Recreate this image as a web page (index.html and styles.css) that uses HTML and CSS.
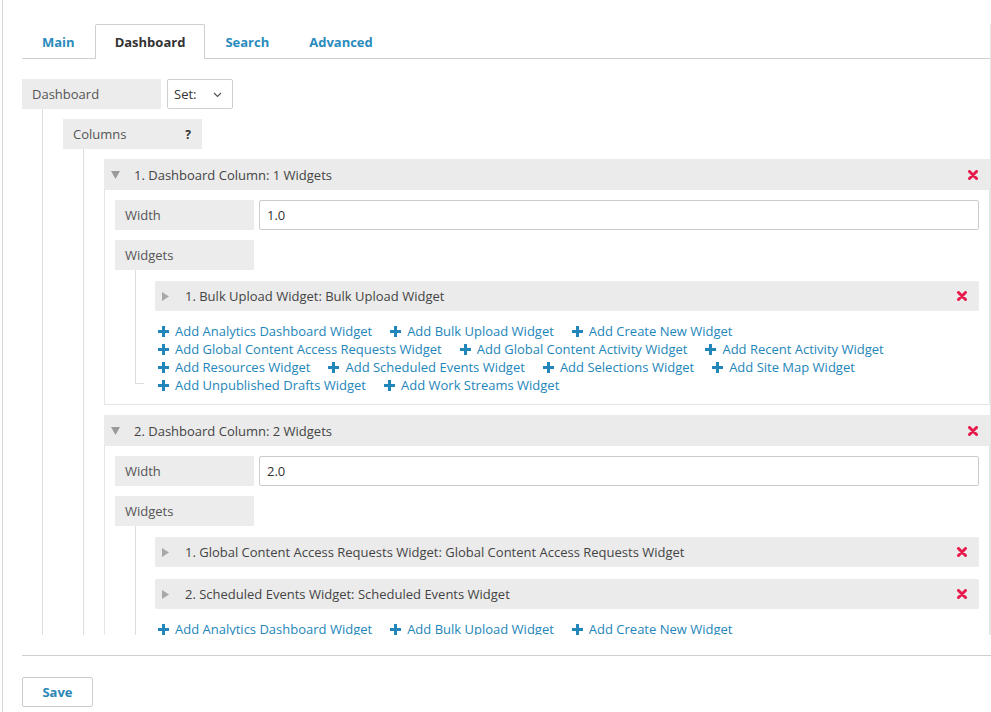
FILE: index.html
```html
<!DOCTYPE html>
<html>
<head>
<meta charset="utf-8">
<link rel="stylesheet" href="styles.css">
</head>
<body>
<div class="frame">
  <div class="panel">
    <nav class="tabs">
      <a class="tab">Main</a>
      <a class="tab active">Dashboard</a>
      <a class="tab">Search</a>
      <a class="tab">Advanced</a>
    </nav>
    <div class="scroll">
      <div class="row">
        <div class="label">Dashboard</div>
        <div class="select">Set:<svg class="chev" width="9" height="6" viewBox="0 0 9 6"><path d="M1 1 L4.5 4.5 L8 1" fill="none" stroke="#555" stroke-width="1.2"/></svg></div>
      </div>
      <div class="children">
        <div class="row">
          <div class="label label-help">Columns <span class="help">?</span></div>
        </div>
        <div class="children">
          <div class="columns">
            <div class="col">
              <div class="col-head">
                <svg class="tri-down" width="9" height="8" viewBox="0 0 9 8"><polygon points="0,0 9,0 4.5,8" fill="#9a9a9a"/></svg>
                <span class="col-title">1. Dashboard Column: 1 Widgets</span>
                <svg class="del" width="10" height="10" viewBox="0 0 10 10"><path d="M1.5 1.5 L8.5 8.5 M8.5 1.5 L1.5 8.5" stroke="#e8194b" stroke-width="3" stroke-linecap="round"/></svg>
              </div>
              <div class="col-body">
                <div class="row">
                  <div class="label">Width</div>
                  <div class="input">1.0</div>
                </div>
                <div class="row">
                  <div class="label">Widgets</div>
                </div>
                <div class="branch">
                  <div class="item">
                    <svg class="tri-right" width="7" height="9" viewBox="0 0 7 9"><polygon points="0,0 7,4.5 0,9" fill="#a8a8a8"/></svg>
                    <span class="item-title">1. Bulk Upload Widget: Bulk Upload Widget</span>
                    <svg class="del" width="10" height="10" viewBox="0 0 10 10"><path d="M1.5 1.5 L8.5 8.5 M8.5 1.5 L1.5 8.5" stroke="#e8194b" stroke-width="3" stroke-linecap="round"/></svg>
                  </div>
                  <div class="links">
                    <div class="link-row">
                      <a class="add"><svg class="plus" width="11" height="11" viewBox="0 0 11 11"><path d="M4 0h3v4h4v3h-4v4h-3v-4h-4v-3h4z" fill="#2386ba"/></svg>Add Analytics Dashboard Widget</a>
                      <a class="add"><svg class="plus" width="11" height="11" viewBox="0 0 11 11"><path d="M4 0h3v4h4v3h-4v4h-3v-4h-4v-3h4z" fill="#2386ba"/></svg>Add Bulk Upload Widget</a>
                      <a class="add"><svg class="plus" width="11" height="11" viewBox="0 0 11 11"><path d="M4 0h3v4h4v3h-4v4h-3v-4h-4v-3h4z" fill="#2386ba"/></svg>Add Create New Widget</a>
                    </div>
                    <div class="link-row">
                      <a class="add"><svg class="plus" width="11" height="11" viewBox="0 0 11 11"><path d="M4 0h3v4h4v3h-4v4h-3v-4h-4v-3h4z" fill="#2386ba"/></svg>Add Global Content Access Requests Widget</a>
                      <a class="add"><svg class="plus" width="11" height="11" viewBox="0 0 11 11"><path d="M4 0h3v4h4v3h-4v4h-3v-4h-4v-3h4z" fill="#2386ba"/></svg>Add Global Content Activity Widget</a>
                      <a class="add"><svg class="plus" width="11" height="11" viewBox="0 0 11 11"><path d="M4 0h3v4h4v3h-4v4h-3v-4h-4v-3h4z" fill="#2386ba"/></svg>Add Recent Activity Widget</a>
                    </div>
                    <div class="link-row">
                      <a class="add"><svg class="plus" width="11" height="11" viewBox="0 0 11 11"><path d="M4 0h3v4h4v3h-4v4h-3v-4h-4v-3h4z" fill="#2386ba"/></svg>Add Resources Widget</a>
                      <a class="add"><svg class="plus" width="11" height="11" viewBox="0 0 11 11"><path d="M4 0h3v4h4v3h-4v4h-3v-4h-4v-3h4z" fill="#2386ba"/></svg>Add Scheduled Events Widget</a>
                      <a class="add"><svg class="plus" width="11" height="11" viewBox="0 0 11 11"><path d="M4 0h3v4h4v3h-4v4h-3v-4h-4v-3h4z" fill="#2386ba"/></svg>Add Selections Widget</a>
                      <a class="add"><svg class="plus" width="11" height="11" viewBox="0 0 11 11"><path d="M4 0h3v4h4v3h-4v4h-3v-4h-4v-3h4z" fill="#2386ba"/></svg>Add Site Map Widget</a>
                    </div>
                    <div class="link-row">
                      <a class="add"><svg class="plus" width="11" height="11" viewBox="0 0 11 11"><path d="M4 0h3v4h4v3h-4v4h-3v-4h-4v-3h4z" fill="#2386ba"/></svg>Add Unpublished Drafts Widget</a>
                      <a class="add"><svg class="plus" width="11" height="11" viewBox="0 0 11 11"><path d="M4 0h3v4h4v3h-4v4h-3v-4h-4v-3h4z" fill="#2386ba"/></svg>Add Work Streams Widget</a>
                    </div>
                  </div>
                </div>
              </div>
            </div>

            <div class="col">
              <div class="col-head">
                <svg class="tri-down" width="9" height="8" viewBox="0 0 9 8"><polygon points="0,0 9,0 4.5,8" fill="#9a9a9a"/></svg>
                <span class="col-title">2. Dashboard Column: 2 Widgets</span>
                <svg class="del" width="10" height="10" viewBox="0 0 10 10"><path d="M1.5 1.5 L8.5 8.5 M8.5 1.5 L1.5 8.5" stroke="#e8194b" stroke-width="3" stroke-linecap="round"/></svg>
              </div>
              <div class="col-body">
                <div class="row">
                  <div class="label">Width</div>
                  <div class="input">2.0</div>
                </div>
                <div class="row">
                  <div class="label">Widgets</div>
                </div>
                <div class="branch">
                  <div class="item">
                    <svg class="tri-right" width="7" height="9" viewBox="0 0 7 9"><polygon points="0,0 7,4.5 0,9" fill="#a8a8a8"/></svg>
                    <span class="item-title">1. Global Content Access Requests Widget: Global Content Access Requests Widget</span>
                    <svg class="del" width="10" height="10" viewBox="0 0 10 10"><path d="M1.5 1.5 L8.5 8.5 M8.5 1.5 L1.5 8.5" stroke="#e8194b" stroke-width="3" stroke-linecap="round"/></svg>
                  </div>
                  <div class="item">
                    <svg class="tri-right" width="7" height="9" viewBox="0 0 7 9"><polygon points="0,0 7,4.5 0,9" fill="#a8a8a8"/></svg>
                    <span class="item-title">2. Scheduled Events Widget: Scheduled Events Widget</span>
                    <svg class="del" width="10" height="10" viewBox="0 0 10 10"><path d="M1.5 1.5 L8.5 8.5 M8.5 1.5 L1.5 8.5" stroke="#e8194b" stroke-width="3" stroke-linecap="round"/></svg>
                  </div>
                  <div class="links">
                    <div class="link-row">
                      <a class="add"><svg class="plus" width="11" height="11" viewBox="0 0 11 11"><path d="M4 0h3v4h4v3h-4v4h-3v-4h-4v-3h4z" fill="#2386ba"/></svg>Add Analytics Dashboard Widget</a>
                      <a class="add"><svg class="plus" width="11" height="11" viewBox="0 0 11 11"><path d="M4 0h3v4h4v3h-4v4h-3v-4h-4v-3h4z" fill="#2386ba"/></svg>Add Bulk Upload Widget</a>
                      <a class="add"><svg class="plus" width="11" height="11" viewBox="0 0 11 11"><path d="M4 0h3v4h4v3h-4v4h-3v-4h-4v-3h4z" fill="#2386ba"/></svg>Add Create New Widget</a>
                    </div>
                    <div class="link-row">
                      <a class="add"><svg class="plus" width="11" height="11" viewBox="0 0 11 11"><path d="M4 0h3v4h4v3h-4v4h-3v-4h-4v-3h4z" fill="#2386ba"/></svg>Add Global Content Access Requests Widget</a>
                      <a class="add"><svg class="plus" width="11" height="11" viewBox="0 0 11 11"><path d="M4 0h3v4h4v3h-4v4h-3v-4h-4v-3h4z" fill="#2386ba"/></svg>Add Global Content Activity Widget</a>
                    </div>
                  </div>
                </div>
              </div>
            </div>
          </div>
        </div>
      </div>
    </div>
  </div>
  <div class="footer">
    <button class="save">Save</button>
  </div>
</div>
</body>
</html>
```

FILE: styles.css
```css
* { box-sizing: border-box; }
html, body { margin: 0; padding: 0; background: #fff; }
body {
  font-family: "Open Sans", "Liberation Sans", sans-serif;
  font-size: 13px;
  color: #555;
  width: 991px;
  height: 712px;
  overflow: hidden;
}
.frame {
  margin-left: 2px;
  border-left: 1px solid #d6d6d6;
  height: 712px;
  padding-left: 19px;
  padding-top: 24px;
}
.panel {
  border-right: 1px solid #e6e6e6;
}
.tabs {
  display: flex;
  height: 35px;
  border-bottom: 1px solid #cfcfcf;
}
.tab {
  display: flex;
  align-items: center;
  padding: 0 19px 1px;
  height: 35px;
  border: 1px solid transparent;
  border-bottom: none;
  font-weight: 700;
  color: #2a8bbd;
  border-radius: 2px 2px 0 0;
}
.tab.active {
  border-color: #cfcfcf;
  color: #333;
  background: #fff;
  height: 35px;
  margin-bottom: -1px;
}
.scroll {
  height: 576px;
  overflow: hidden;
  padding-top: 20px;
}
.row {
  display: flex;
  align-items: stretch;
}
.label {
  width: 139px;
  height: 30px;
  background: #ececec;
  display: flex;
  align-items: center;
  padding-left: 10px;
  color: #555;
  flex: none;
}
.label-help {
  justify-content: space-between;
  padding-right: 11px;
}
.help {
  font-weight: 700;
  color: #333;
  font-size: 12px;
}
.select {
  margin-left: 6px;
  width: 66px;
  height: 30px;
  border: 1px solid #cfcfcf;
  border-radius: 2px;
  display: flex;
  align-items: center;
  justify-content: space-between;
  padding: 0 10px 0 6px;
  color: #333;
}
.chev { margin-top: 1px; }
.children {
  margin-left: 20px;
  border-left: 1px solid #dedede;
  padding-left: 20px;
  padding-top: 10px;
}
.columns {
  display: flex;
  flex-direction: column;
  gap: 10px;
}
.col-head {
  height: 31px;
  background: #ebebeb;
  display: flex;
  align-items: center;
  padding: 0 12px 0 7px;
  color: #444;
}
.tri-down { margin-right: 14px; margin-top: 1px; }
.col-title { flex: 1; }
.del { flex: none; }
.col-body {
  border: 1px solid #e6e6e6;
  border-top: none;
  padding: 10px 10px 10px 10px;
  display: flex;
  flex-direction: column;
  gap: 10px;
}
.input {
  flex: 1;
  margin-left: 5px;
  height: 30px;
  border: 1px solid #cccccc;
  border-radius: 2px;
  display: flex;
  align-items: center;
  padding-left: 7px;
  color: #333;
}
.branch {
  position: relative;
  margin-left: 20px;
  margin-top: -10px;
  padding-left: 20px;
  padding-top: 11px;
}
.branch::before {
  content: "";
  position: absolute;
  left: 0;
  top: 0;
  bottom: 10px;
  width: 8px;
  border-left: 1px solid #dedede;
  border-bottom: 1px solid #dedede;
}
.item {
  height: 30px;
  background: #ebebeb;
  border-radius: 2px;
  display: flex;
  align-items: center;
  padding: 0 12px 0 7px;
  margin-bottom: 12px;
  color: #444;
}
.tri-right { margin-right: 16px; }
.item-title { flex: 1; }
.links {
  margin-top: -1px;
  padding-left: 3px;
}
.link-row {
  display: flex;
  gap: 18px;
  line-height: 18px;
  white-space: nowrap;
}
.add {
  display: flex;
  align-items: center;
  color: #2386ba;
}
.plus {
  margin-right: 6px;
  flex: none;
}
.footer {
  margin-top: 20px;
  border-top: 1px solid #cfcfcf;
  padding-top: 21px;
}
.save {
  width: 71px;
  height: 30px;
  background: #fff;
  border: 1px solid #cccccc;
  border-radius: 2px;
  font-family: "Open Sans", "Liberation Sans", sans-serif;
  font-size: 13px;
  font-weight: 700;
  color: #2a86b6;
  padding: 0;
}
```
